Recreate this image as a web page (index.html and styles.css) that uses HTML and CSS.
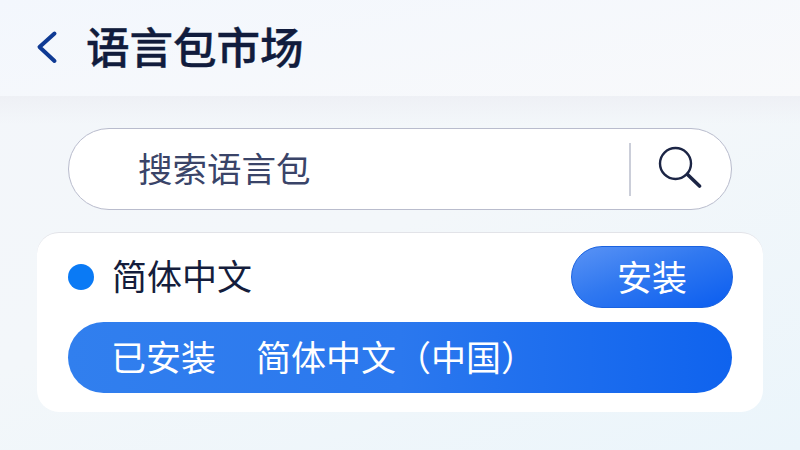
FILE: index.html
```html
<!DOCTYPE html>
<html lang="zh-CN">
<head>
<meta charset="utf-8">
<title>语言包市场</title>
<link rel="stylesheet" href="styles.css">
</head>
<body>
<div class="page">
  <header class="header">
    <svg class="back" viewBox="0 0 24 36" aria-hidden="true"><path d="M19.500 3.500 4.500 17 19.500 31" fill="none" stroke="#0f3a94" stroke-width="4" stroke-linecap="round" stroke-linejoin="round"/></svg>
    <h1 class="title">语言包市场</h1>
  </header>
  <main class="main">
    <div class="search">
      <span class="search-text">搜索语言包</span>
      <span class="divider"></span>
      <svg class="search-icon" viewBox="0 0 44 44" aria-hidden="true"><circle cx="17.500" cy="17.500" r="15.500" fill="none" stroke="#1c2545" stroke-width="2.400"/><path d="M29.500 28.500 41.500 40" fill="none" stroke="#1c2545" stroke-width="3.600" stroke-linecap="round"/></svg>
    </div>
    <section class="card">
      <div class="row">
        <span class="dot"></span>
        <span class="name">简体中文</span>
        <button class="install">安装</button>
      </div>
      <div class="installed"><span>已安装</span><span>简体中文（中国）</span></div>
    </section>
  </main>
</div>
</body>
</html>
```
FILE: styles.css
```css
* { box-sizing: border-box; }
html, body { margin: 0; height: 100%; }
body {
  font-family: "Noto Sans CJK SC", "Noto Sans", sans-serif;
  overflow: hidden;
}
.page {
  width: 800px;
  height: 450px;
  display: flex;
  flex-direction: column;
  background: linear-gradient(160deg, #f3f6fa 0%, #f3f7fa 50%, #ebf5fb 100%);
}
.header {
  height: 96px;
  flex: none;
  display: flex;
  align-items: center;
  padding: 0 0 4px 35px;
  background: linear-gradient(170deg, #f3f7fd 0%, #f8f9fb 100%);
}
.back { width: 24px; height: 36px; flex: none; margin-top: 4px; }
.title {
  margin: 0 0 0 27px;
  font-size: 43.500px;
  line-height: 1;
  font-weight: 500;
  -webkit-text-stroke: 0.4px #111c3d;
  color: #111c3d;
}
.main {
  flex: 1;
  padding: 32px 37px 0;
  background: linear-gradient(180deg, #eef0f5 0, rgba(238, 240, 245, 0) 28px);
}
.search {
  height: 82px;
  margin: 0 31px;
  display: flex;
  align-items: center;
  padding: 0 29px 0 69px;
  background: #fff;
  border: 1px solid #b9bccd;
  border-radius: 41px;
}
.search-text {
  flex: 1;
  padding-bottom: 3px;
  font-size: 34.500px;
  line-height: 1;
  color: #3a4468;
}
.divider {
  width: 2px;
  height: 53px;
  background: #cbced9;
}
.search-icon { width: 44px; height: 44px; margin-left: 27px; margin-bottom: 2px; }
.card {
  margin-top: 22px;
  height: 180px;
  padding: 13px 31px 0;
  background: #fff;
  border-top: 1px solid #e2e3e8;
  border-radius: 22px;
}
.row { display: flex; align-items: center; height: 62px; }
.dot {
  width: 26px;
  height: 26px;
  margin-top: -1px;
  border-radius: 50%;
  background: #0a7af5;
}
.name {
  flex: 1;
  margin-left: 18px;
  padding-bottom: 5px;
  font-size: 35px;
  line-height: 1;
  color: #141d3c;
}
.install {
  width: 162px;
  height: 62px;
  margin-right: -1px;
  padding: 0 0 3px;
  border: 1px solid #1a62e0;
  border-radius: 31px;
  font-family: inherit;
  font-size: 35px;
  line-height: 1;
  color: #fff;
  background: linear-gradient(160deg, #5a93f5 0%, #3078f0 45%, #0a5df0 100%);
}
.installed {
  height: 71px;
  margin-top: 14px;
  display: flex;
  align-items: center;
  gap: 40px;
  padding: 0 0 5px 43px;
  font-size: 35px;
  line-height: 1;
  color: #fff;
  border-radius: 36px;
  background: linear-gradient(90deg, #317fee 0%, #2b78ee 50%, #0f63ee 100%);
}
```
